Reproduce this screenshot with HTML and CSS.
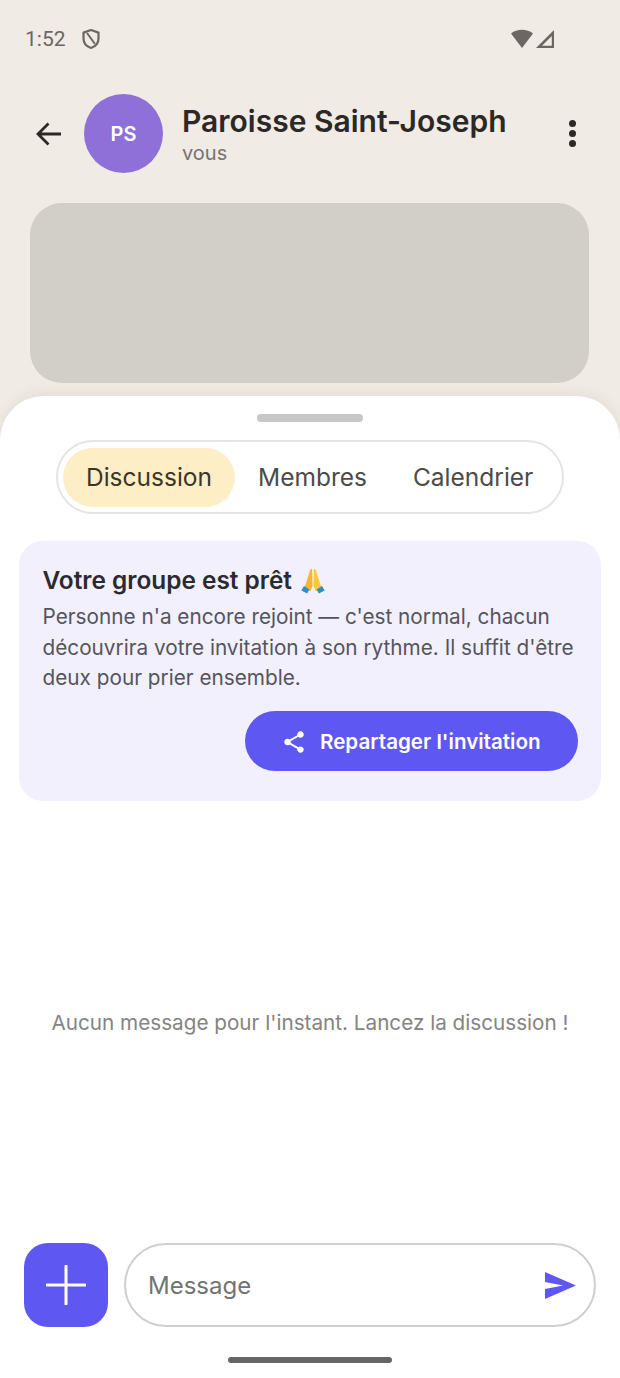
FILE: index.html
```html
<!DOCTYPE html>
<html lang="fr">
<head>
  <meta charset="UTF-8">
  <title>Paroisse Saint-Joseph</title>
  <link rel="stylesheet" href="styles.css">
</head>
<body>

  <div class="status-bar">
    <span class="clock">1:52</span>
    <svg class="shield" width="20" height="22" viewBox="0 0 20 22">
      <path d="M10 2 L17.500 4.600 V10.500 C17.500 15 14.500 18.500 10 20 C5.500 18.500 2.500 15 2.500 10.500 V4.600 Z" fill="none" stroke="#6b6762" stroke-width="2.200" stroke-linejoin="round"/>
      <path d="M6 5 L14 16" stroke="#6b6762" stroke-width="2"/>
    </svg>
    <span class="spacer"></span>
    <svg class="signal" width="46" height="22" viewBox="0 0 46 22">
      <path d="M1 5.500 C7 0.500 17 0.500 23 5.500 L12 20 Z" fill="#6b6762"/>
      <path d="M44 2 V20 H26 Z M41.800 8 L32 17.800 H41.800 Z" fill="#6b6762" fill-rule="evenodd"/>
    </svg>
  </div>

  <header class="top-bar">
    <svg class="back" width="28" height="28" viewBox="0 0 28 28">
      <path d="M26 14 H3.500 M13.500 3.500 L3 14 L13.500 24.500" fill="none" stroke="#2b2825" stroke-width="2.800"/>
    </svg>
    <div class="avatar">PS</div>
    <div class="group-info">
      <div class="group-name">Paroisse Saint-Joseph</div>
      <div class="group-sub">vous</div>
    </div>
    <div class="more"><i></i><i></i><i></i></div>
  </header>

  <div class="placeholder"></div>

  <main class="sheet">
    <div class="handle"></div>

    <nav class="tabs">
      <div class="tab active">Discussion</div>
      <div class="tab">Membres</div>
      <div class="tab">Calendrier</div>
    </nav>

    <section class="notice">
      <h2>Votre groupe est prêt
        <svg class="pray" width="26" height="27" viewBox="0 0 28 30">
          <path d="M13 2 C11 2 10.500 4 10 6 L6 19 L4 24 L11 27 L13.500 21 Z" fill="#f9b62c"/>
          <path d="M15 2 C17 2 17.500 4 18 6 L22 19 L24 24 L17 27 L14.500 21 Z" fill="#fdc83a"/>
          <path d="M4 21 L1 26 L7.500 29.500 L10 25 Z M24 21 L27 26 L20.500 29.500 L18 25 Z" fill="#2f8fc4"/>
        </svg>
      </h2>
      <p>Personne n'a encore rejoint — c'est normal, chacun découvrira votre invitation à son rythme. Il suffit d'être deux pour prier ensemble.</p>
      <div class="notice-actions">
        <button class="share-btn">
          <svg width="26" height="26" viewBox="0 0 24 24" fill="#fff">
            <path d="M18 16.100c-.800 0-1.500.300-2 .800l-7.100-4.200c.100-.200.100-.500.100-.700s0-.500-.100-.700L16 7.200c.500.500 1.200.800 2 .800 1.700 0 3-1.300 3-3s-1.300-3-3-3-3 1.300-3 3c0 .200 0 .500.100.700L8 9.800C7.500 9.300 6.800 9 6 9c-1.700 0-3 1.300-3 3s1.300 3 3 3c.800 0 1.500-.300 2-.800l7.100 4.200c-.100.200-.100.400-.100.600 0 1.600 1.300 2.900 3 2.900s3-1.300 3-2.900-1.300-2.900-3-2.900z"/>
          </svg>
          Repartager l'invitation
        </button>
      </div>
    </section>

    <div class="empty">Aucun message pour l'instant. Lancez la discussion !</div>

    <div class="composer">
      <button class="add-btn">
        <svg width="40" height="40" viewBox="0 0 40 40">
          <path d="M20 1 V39 M1 20 H39" stroke="#fff" stroke-width="3" stroke-linecap="round"/>
        </svg>
      </button>
      <div class="input-box">
        <span class="placeholder-text">Message</span>
        <svg width="31" height="27" viewBox="0 0 31 27">
          <path d="M0 0 L31 13.500 L0 27 V17 L18 13.500 L0 10 Z" fill="#5f57f2"/>
        </svg>
      </div>
    </div>

    <div class="home-bar"></div>
  </main>

</body>
</html>
```

FILE: styles.css
```css
* {
  box-sizing: border-box;
}
html, body {
  margin: 0;
  height: 100%;
}
body {
  display: flex;
  flex-direction: column;
  height: 1378px;
  overflow: hidden;
  background-color: #f0ebe4;
  color: #2b2825;
  font-family: "Inter", sans-serif;
}

/* status bar */
.status-bar {
  display: flex;
  align-items: center;
  height: 78px;
  padding: 0 64px 0 25px;
  color: #6b6762;
  font-family: "Roboto", sans-serif;
}
.clock {
  font-size: 21px;
  margin-right: 15px;
}
.spacer {
  flex: 1;
}

/* header */
.top-bar {
  display: flex;
  align-items: center;
  height: 79px;
  margin-top: 16px;
  padding: 0 44px 0 35px;
}
.back {
  margin-right: 21px;
}
.avatar {
  display: flex;
  align-items: center;
  justify-content: center;
  width: 79px;
  height: 79px;
  border-radius: 50%;
  background-color: #8f6fd8;
  color: #fff;
  font-size: 20px;
  font-weight: 600;
}
.group-info {
  flex: 1;
  margin-left: 19px;
  padding-top: 2px;
}
.group-name {
  font-size: 30px;
  line-height: 36px;
  font-weight: 600;
}
.group-sub {
  margin-top: 1px;
  color: #77736e;
  font-size: 20px;
  line-height: 26px;
}
.more {
  display: flex;
  flex-direction: column;
  gap: 3px;
}
.more i {
  width: 7px;
  height: 7px;
  border-radius: 50%;
  background-color: #2b2825;
}

.placeholder {
  height: 180px;
  margin: 30px 31px 0 30px;
  border-radius: 32px;
  background-color: #d2cfc8;
}

/* bottom sheet */
.sheet {
  flex: 1;
  display: flex;
  flex-direction: column;
  margin-top: 13px;
  border-radius: 44px 44px 0 0;
  background-color: #fff;
  box-shadow: 0 -2px 14px rgba(60, 50, 30, 0.08);
}
.handle {
  width: 106px;
  height: 8px;
  margin: 18px auto 0;
  border-radius: 4px;
  background-color: #c8c6c6;
}

.tabs {
  display: flex;
  align-items: center;
  width: 508px;
  height: 74px;
  margin: 18px auto 0;
  padding: 0 5px;
  border: 2px solid #e6e4e4;
  border-radius: 37px;
}
.tab {
  display: flex;
  align-items: center;
  height: 59px;
  padding: 0 23px;
  border-radius: 30px;
  color: #4d4b49;
  font-size: 24.500px;
}
.tab.active {
  background-color: #fdeec5;
  color: #3b3527;
}

/* invitation notice */
.notice {
  height: 260px;
  margin: 27px 19px 0;
  padding: 23px 23px 0 23.500px;
  border-radius: 24px;
  background-color: #f2f0fd;
}
.notice h2 {
  display: flex;
  align-items: center;
  gap: 8px;
  margin: 0;
  height: 32px;
  font-size: 24.400px;
  font-weight: 600;
  color: #2a2a30;
}
.notice p {
  margin: 6px 0 0;
  color: #55545e;
  font-size: 20.750px;
  line-height: 30.500px;
}
.notice-actions {
  display: flex;
  justify-content: flex-end;
  margin-top: 17px;
}
.share-btn {
  display: flex;
  align-items: center;
  gap: 13px;
  width: 333px;
  height: 60px;
  padding: 2px 0 0 36px;
  border: none;
  border-radius: 30px;
  background-color: #5f57f2;
  color: #fff;
  font-family: "Inter", sans-serif;
  font-size: 20.600px;
  font-weight: 600;
}

.empty {
  flex: 1;
  display: flex;
  align-items: center;
  justify-content: center;
  color: #858383;
  font-size: 20.700px;
}

/* message composer */
.composer {
  display: flex;
  align-items: center;
  gap: 16px;
  height: 84px;
  padding: 0 24px;
}
.add-btn {
  display: flex;
  align-items: center;
  justify-content: center;
  flex: none;
  width: 84px;
  height: 84px;
  padding: 0;
  border: none;
  border-radius: 24px;
  background-color: #5f57f2;
}
.input-box {
  flex: 1;
  display: flex;
  align-items: center;
  justify-content: space-between;
  height: 84px;
  padding: 0 18px 0 22px;
  border: 2px solid #cfcfcf;
  border-radius: 42px;
}
.placeholder-text {
  color: #737373;
  font-size: 24px;
}

.home-bar {
  width: 164px;
  height: 6px;
  margin: 30px auto 15px;
  border-radius: 3px;
  background-color: #666;
}
```
